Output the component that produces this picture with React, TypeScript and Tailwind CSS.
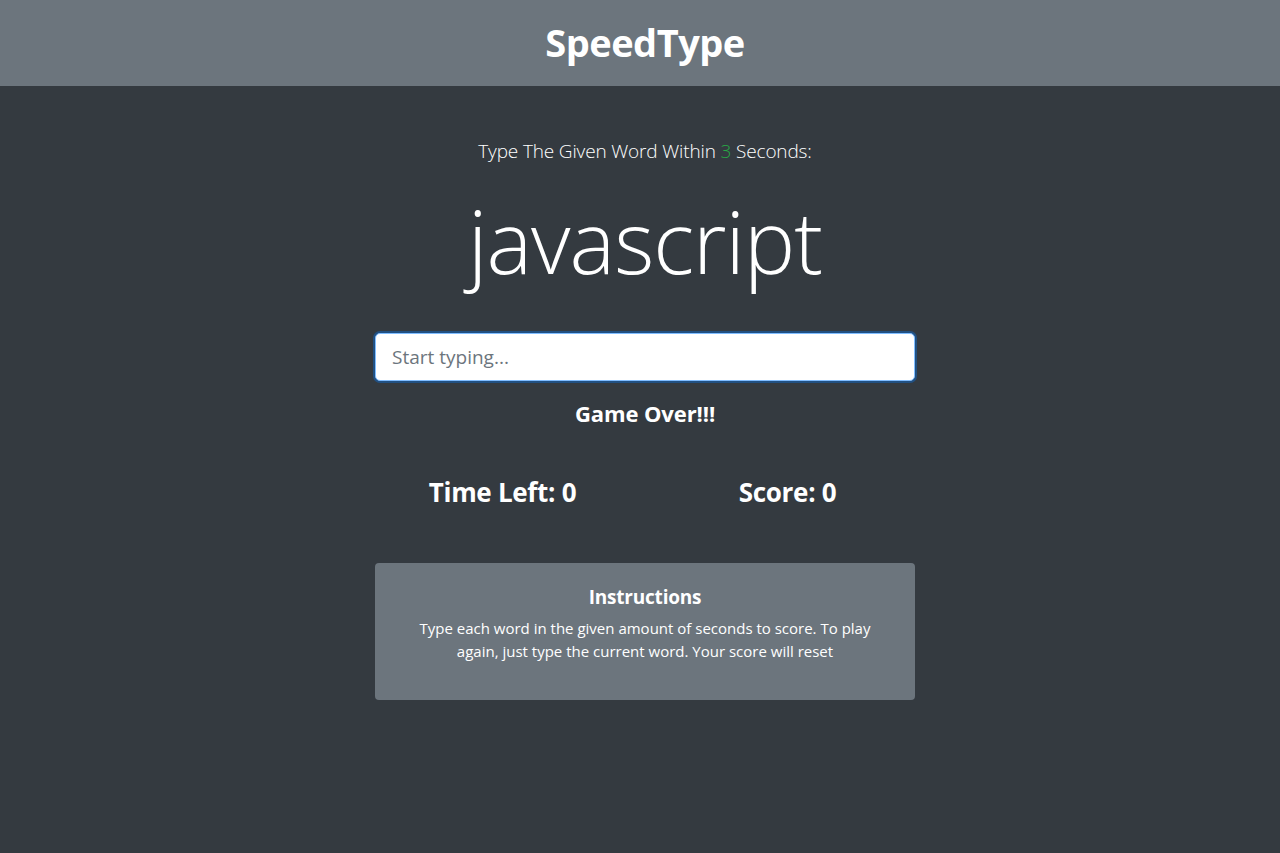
export default function App() {
  return (
    <div className="min-h-[853px] bg-[#343a40] text-white font-['Open_Sans',sans-serif] pl-[10px]">
      <header className="h-[86px] bg-[#6c757d] -ml-[10px] pl-[10px] flex items-center justify-center">
        <h1 className="-mt-[3px] text-[38px] font-bold leading-none tracking-[-0.5px]">SpeedType</h1>
      </header>

      <main className="w-[540px] mx-auto flex flex-col items-center">
        <p className="mt-[50px] text-[19px] font-light leading-[30px] tracking-[-0.15px]">
          Type The Given Word Within <span className="text-[#28a745]">3</span> Seconds:
        </p>

        <h2 className="mt-[20px] text-[86px] font-light leading-[110px] tracking-[-1px]">javascript</h2>

        <input
          autoFocus
          placeholder="Start typing..."
          className="mt-[37px] w-full h-[48px] rounded-[5px] bg-white border border-[#80bdff] px-4 text-[19px] text-[#495057] placeholder:text-[#6c757d] outline-none shadow-[0_0_0_2px_rgba(0,123,255,0.35)]"
        />

        <h4 className="mt-[17px] text-[22px] font-bold leading-[30px] tracking-[-0.1px]">Game Over!!!</h4>

        <div className="mt-[48px] w-[570px] grid grid-cols-2">
          <h3 className="text-center text-[26px] font-bold leading-[32px] tracking-[-0.3px]">Time Left: 0</h3>
          <h3 className="text-center text-[26px] font-bold leading-[32px] tracking-[-0.3px]">Score: 0</h3>
        </div>

        <div className="mt-[55px] w-full h-[137px] rounded-[4px] bg-[#6c757d] px-10 pt-[22px] text-center">
          <h5 className="text-[19px] font-bold leading-[24px] tracking-[-0.2px]">Instructions</h5>
          <p className="mt-[8px] text-[15px] leading-[23px]">
            Type each word in the given amount of seconds to score. To play again, just type the current word. Your score will reset
          </p>
        </div>
      </main>
    </div>
  );
}
